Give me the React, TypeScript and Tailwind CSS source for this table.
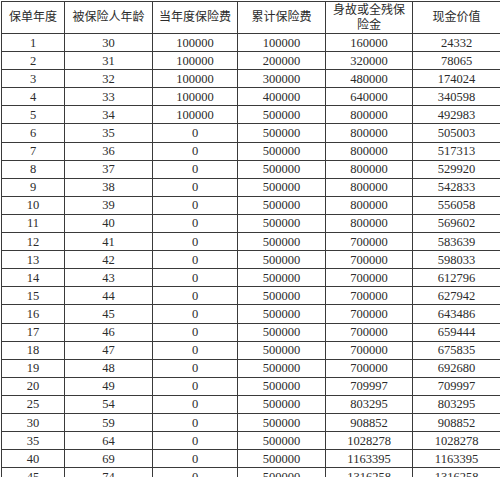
import React from 'react';

const rows: [number, number, number, number, number, number][] = [
  [1, 30, 100000, 100000, 160000, 24332],
  [2, 31, 100000, 200000, 320000, 78065],
  [3, 32, 100000, 300000, 480000, 174024],
  [4, 33, 100000, 400000, 640000, 340598],
  [5, 34, 100000, 500000, 800000, 492983],
  [6, 35, 0, 500000, 800000, 505003],
  [7, 36, 0, 500000, 800000, 517313],
  [8, 37, 0, 500000, 800000, 529920],
  [9, 38, 0, 500000, 800000, 542833],
  [10, 39, 0, 500000, 800000, 556058],
  [11, 40, 0, 500000, 800000, 569602],
  [12, 41, 0, 500000, 700000, 583639],
  [13, 42, 0, 500000, 700000, 598033],
  [14, 43, 0, 500000, 700000, 612796],
  [15, 44, 0, 500000, 700000, 627942],
  [16, 45, 0, 500000, 700000, 643486],
  [17, 46, 0, 500000, 700000, 659444],
  [18, 47, 0, 500000, 700000, 675835],
  [19, 48, 0, 500000, 700000, 692680],
  [20, 49, 0, 500000, 709997, 709997],
  [25, 54, 0, 500000, 803295, 803295],
  [30, 59, 0, 500000, 908852, 908852],
  [35, 64, 0, 500000, 1028278, 1028278],
  [40, 69, 0, 500000, 1163395, 1163395],
  [45, 74, 0, 500000, 1316258, 1316258],
];

const headers = ['保单年度', '被保险人年龄', '当年度保险费', '累计保险费', '身故或全残保险金', '现金价值'];

export default function App() {
  return (
    <div className="w-[500px] h-[477px] overflow-hidden bg-white pt-px pl-px">
      <table
        className="table-fixed border-collapse w-[499px] text-[#2b2b2b] text-center"
        style={{ fontFamily: '"Liberation Serif", "Noto Sans CJK SC", serif' }}
      >
        <colgroup>
          <col className="w-[63px]" />
          <col className="w-[88px]" />
          <col className="w-[85px]" />
          <col className="w-[88px]" />
          <col className="w-[87px]" />
          <col className="w-[88px]" />
        </colgroup>
        <thead>
          <tr className="h-[32px]">
            {headers.map((h, i) => (
              <th
                key={i}
                className="border border-[#3a3a3a] font-normal text-[12px] leading-[15px] px-[6px] p-0"
              >
                {h}
              </th>
            ))}
          </tr>
        </thead>
        <tbody>
          {rows.map((r) => (
            <tr key={r[0]} className="h-[18.1px]">
              {r.map((v, j) => (
                <td key={j} className="border border-[#3a3a3a] text-[12.5px] leading-[16px] p-0">
                  {v}
                </td>
              ))}
            </tr>
          ))}
        </tbody>
      </table>
    </div>
  );
}
